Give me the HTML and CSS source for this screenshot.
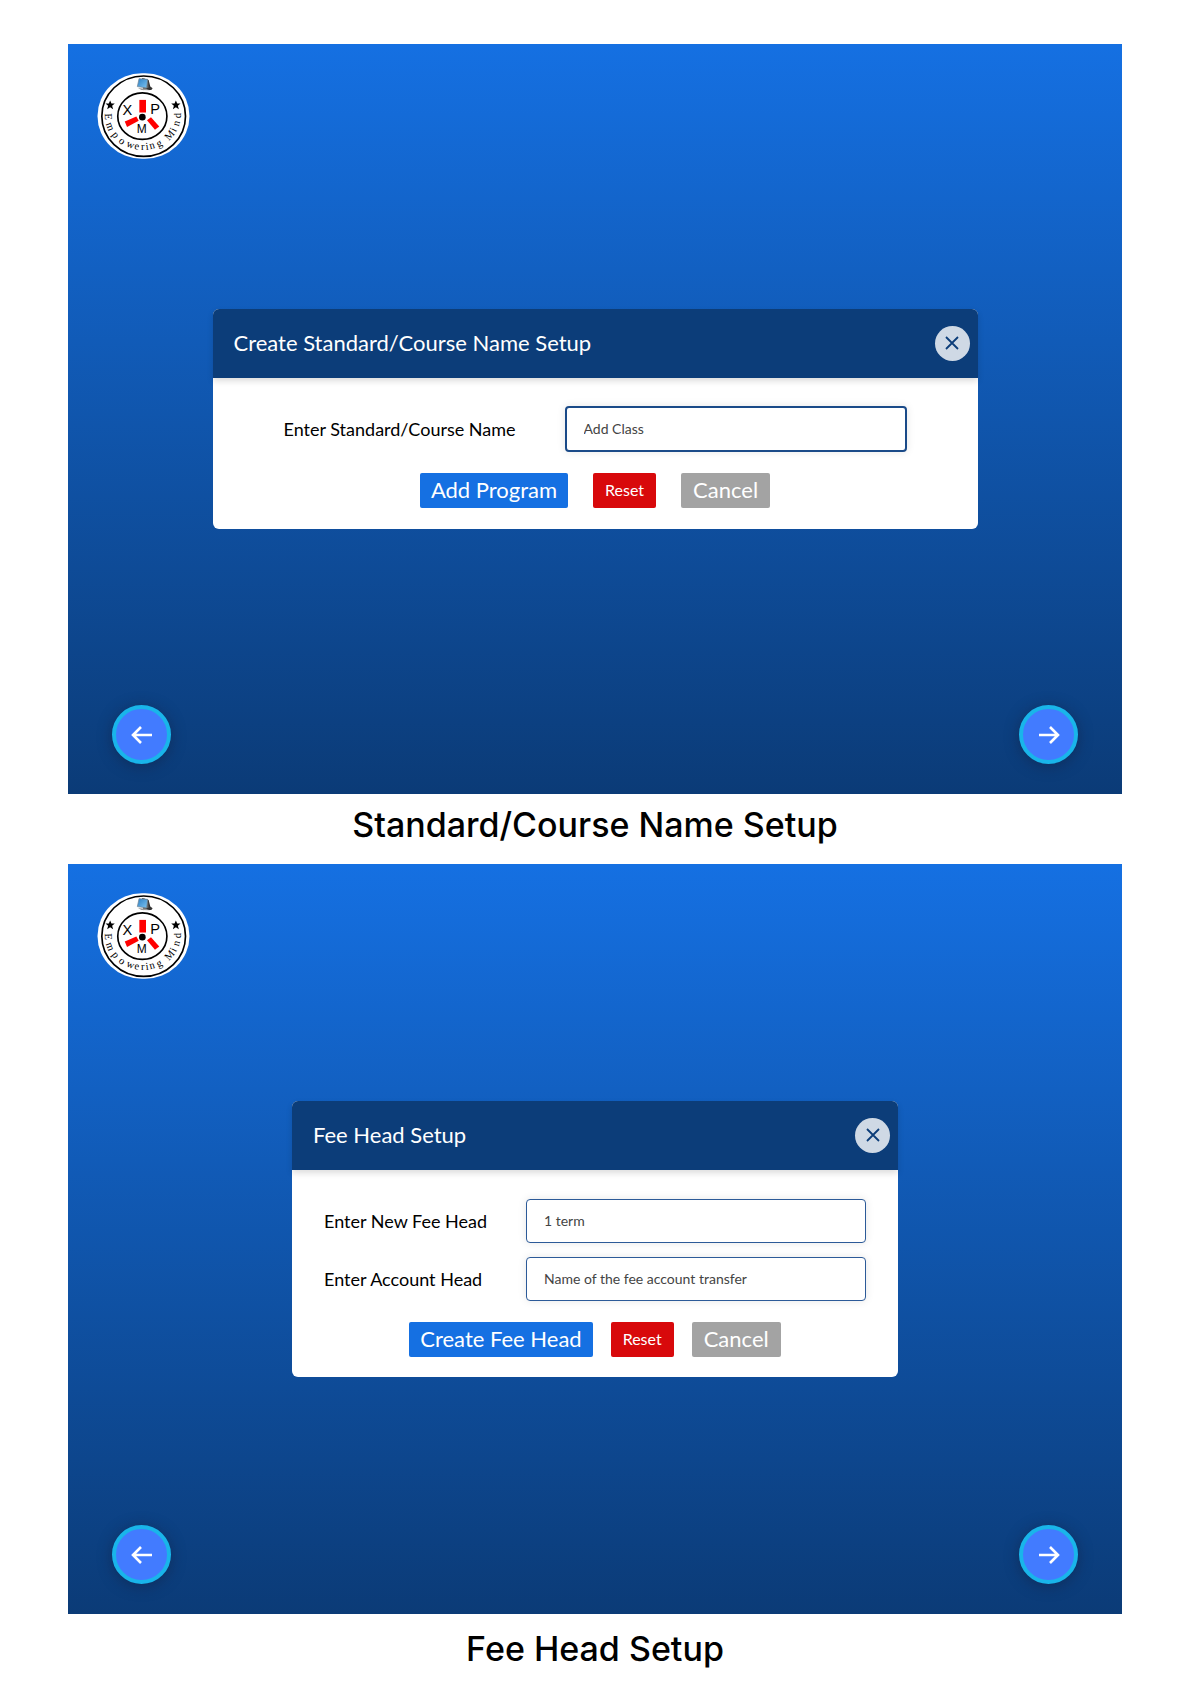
FILE: index.html
```html
<!DOCTYPE html>
<html lang="en">
<head>
<meta charset="utf-8">
<meta name="viewport" content="width=device-width, initial-scale=1">
<title>Setup screens</title>
<link rel="stylesheet" href="styles.css">
</head>
<body>
<svg class="sprite" aria-hidden="true">
  <defs>
    <linearGradient id="screen-fill" x1="0" y1="0" x2="1" y2="1">
      <stop offset="0" stop-color="#2d7fc4"/>
      <stop offset="1" stop-color="#7cc4f2"/>
    </linearGradient>
    <symbol id="logo" viewBox="110 128 279 259">
      <rect x="111" y="129" width="277" height="257" rx="134" ry="128" fill="#fff"/>
      <ellipse cx="250" cy="258" rx="126" ry="121" fill="none" stroke="#000" stroke-width="5"/>
      <ellipse cx="246" cy="258" rx="74" ry="70" fill="none" stroke="#000" stroke-width="5"/>
      <path d="M245 143l20 6 5 20 7 5-4 5h-24z" fill="#333"/>
      <path d="M247 143l16 5 2 24-17 8z" fill="#666"/>
      <path d="M236 145l26 2-3 26-28-4z" fill="url(#screen-fill)" stroke="#6b7f8e" stroke-width="2"/>
      <path d="M233 173l26 3 10 4-26-1z" fill="#999"/>
      <path id="star" d="M149 211l4 9 10 0-8 7 3 10-9-6-9 6 3-10-8-7 10 0z" fill="#000"/>
      <use href="#star" x="198"/>
      <rect x="237" y="209" width="20" height="38" fill="#f00"/>
      <path d="M193 274l35-15 7 13-35 19z" fill="#f00"/>
      <path d="M260 270l12-9 25 28-13 10z" fill="#f00"/>
      <circle cx="246" cy="261" r="10" fill="#000"/>
      <text class="logo-initial" x="186" y="256">X</text>
      <text class="logo-initial" x="270" y="253">P</text>
      <text class="logo-initial logo-initial-small" x="229" y="308">M</text>
      <text class="logo-motto"
        x="133 136 153 173 196 221 242 257 270 294 312 326 347 356 362"
        y="250 281 314 336 349 357 360 360 358 352 340 333 307 290 264"
        rotate="88 70 52 36 21 10 0 -7 -15 -27 -38 -49 -63 -75 -90">Empowering Mind</text>
    </symbol>
    <symbol id="arrow-left" viewBox="0 0 24 24">
      <path d="M22 12H3M11 4l-8 8 8 8" fill="none" stroke="#fff" stroke-width="2.6"/>
    </symbol>
    <symbol id="arrow-right" viewBox="0 0 24 24">
      <path d="M2 12h19M13 4l8 8-8 8" fill="none" stroke="#fff" stroke-width="2.6"/>
    </symbol>
    <symbol id="close" viewBox="0 0 14 14">
      <path d="M1 1l12 12M13 1L1 13" fill="none" stroke="#0c3d79" stroke-width="1.8"/>
    </symbol>
  </defs>
</svg>

<main class="board">
  <figure class="frame">
    <section class="scene">
      <svg class="logo" role="img" aria-label="XPM Empowering Mind"><use href="#logo"/></svg>
      <form class="card card-wide">
        <header class="card-header">
          <h2 class="card-title">Create Standard/Course Name Setup</h2>
          <button class="close" type="button" aria-label="Close"><svg class="close-icon"><use href="#close"/></svg></button>
        </header>
        <div class="card-body">
          <div class="field">
            <label class="label" for="course-name">Enter Standard/Course Name</label>
            <input class="input" id="course-name" type="text" placeholder="Add Class">
          </div>
          <div class="actions">
            <button class="btn btn-primary" type="submit">Add Program</button>
            <button class="btn btn-reset" type="reset">Reset</button>
            <button class="btn btn-cancel" type="button">Cancel</button>
          </div>
        </div>
      </form>
      <nav class="pager">
        <button class="round" type="button" aria-label="Previous"><svg class="round-icon"><use href="#arrow-left"/></svg></button>
        <button class="round" type="button" aria-label="Next"><svg class="round-icon"><use href="#arrow-right"/></svg></button>
      </nav>
    </section>
    <figcaption class="caption">Standard/Course Name Setup</figcaption>
  </figure>

  <figure class="frame">
    <section class="scene">
      <svg class="logo" role="img" aria-label="XPM Empowering Mind"><use href="#logo"/></svg>
      <form class="card card-narrow">
        <header class="card-header">
          <h2 class="card-title">Fee Head Setup</h2>
          <button class="close" type="button" aria-label="Close"><svg class="close-icon"><use href="#close"/></svg></button>
        </header>
        <div class="card-body">
          <div class="field">
            <label class="label" for="fee-head">Enter New Fee Head</label>
            <input class="input" id="fee-head" type="text" placeholder="1 term">
          </div>
          <div class="field">
            <label class="label" for="account-head">Enter Account Head</label>
            <input class="input" id="account-head" type="text" placeholder="Name of the fee account transfer">
          </div>
          <div class="actions">
            <button class="btn btn-primary" type="submit">Create Fee Head</button>
            <button class="btn btn-reset" type="reset">Reset</button>
            <button class="btn btn-cancel" type="button">Cancel</button>
          </div>
        </div>
      </form>
      <nav class="pager">
        <button class="round" type="button" aria-label="Previous"><svg class="round-icon"><use href="#arrow-left"/></svg></button>
        <button class="round" type="button" aria-label="Next"><svg class="round-icon"><use href="#arrow-right"/></svg></button>
      </nav>
    </section>
    <figcaption class="caption">Fee Head Setup</figcaption>
  </figure>
</main>
</body>
</html>
```

FILE: styles.css
```css
*,
*::before,
*::after {
  box-sizing: border-box;
}

body {
  margin: 0;
  background: #fff;
  color: #000;
  font-family: Lato, "Liberation Sans", sans-serif;
}

button,
input {
  font: inherit;
}

.sprite {
  display: block;
  width: 0;
  height: 0;
}

.board {
  padding: 44px 68px 0;
}

.frame {
  margin: 0;
}

.scene {
  display: grid;
  grid-template-rows: 1fr auto 1fr;
  min-height: 750px;
  padding: 29px 29px 30px;
  background: linear-gradient(180deg, #1570e2 0%, #0b3b77 100%);
}

.caption {
  padding: 7px 0 15px;
  font-family: Inter, "Liberation Sans", sans-serif;
  font-size: 34px;
  font-weight: 500;
  line-height: 48px;
  text-align: center;
}

.frame:last-child .caption {
  padding: 11px 0;
}

.logo {
  width: 93px;
  height: 86px;
}

.logo-initial {
  font-family: "Liberation Sans", sans-serif;
  font-size: 44px;
}

.logo-initial-small {
  font-size: 36px;
}

.logo-motto {
  font-family: "Liberation Serif", serif;
  font-size: 32px;
}

.card {
  justify-self: center;
  width: 100%;
  border-radius: 6px;
  background: #fff;
}

.card-wide {
  max-width: 765px;
}

.card-narrow {
  max-width: 606px;
}

.card-header {
  display: flex;
  align-items: center;
  justify-content: space-between;
  min-height: 69px;
  padding: 0 8px 0 21px;
  border-radius: 6px 6px 0 0;
  background: #0c3d79;
  box-shadow: 0 3px 6px rgba(0, 0, 0, 0.14);
}

.card-title {
  margin: 0;
  color: #fff;
  font-size: 22px;
  font-weight: 400;
  line-height: 28px;
}

.close {
  display: grid;
  place-items: center;
  width: 35px;
  height: 35px;
  padding: 0;
  border: 0;
  border-radius: 50%;
  background: #cfd9e5;
}

.close-icon {
  width: 14px;
  height: 14px;
}

.card-body {
  display: grid;
  gap: 14px;
  padding: 29px 32px 20px;
}

.card-wide .card-body {
  padding: 28px 71px 21px;
}

.field {
  display: flex;
  align-items: center;
  justify-content: space-between;
  gap: 16px;
}

.label {
  font-size: 18px;
  line-height: 24px;
}

.input {
  width: 340px;
  height: 44px;
  padding: 0 17px;
  border: 1px solid #2c5a98;
  border-radius: 4px;
  background: #fff;
  box-shadow: 0 0 8px rgba(0, 0, 0, 0.1);
  color: #444;
  font-size: 14px;
}

.card-wide .input {
  width: 342px;
  height: 46px;
  border: 2px solid #1a4a88;
}

.input::placeholder {
  color: #444;
  opacity: 1;
}

.actions {
  display: flex;
  justify-content: center;
  gap: 18px;
  padding-top: 7px;
}

.card-wide .actions {
  gap: 25px;
}

.btn {
  height: 35px;
  padding: 0 12px;
  border: 0;
  border-radius: 2px;
  color: #fff;
  font-size: 22px;
  line-height: 34px;
}

.btn-primary {
  padding: 0 11px;
  background: #1570e2;
}

.btn-reset {
  padding: 0 12px;
  background: #d8090b;
  font-size: 16px;
}

.btn-cancel {
  background: #a3a3a3;
}

.pager {
  display: flex;
  align-items: flex-end;
  justify-content: space-between;
  padding: 0 15px;
}

.round {
  display: grid;
  place-items: center;
  width: 59px;
  height: 59px;
  padding: 0;
  border: 4px solid #19b5ea;
  border-radius: 50%;
  background: #427bff;
  box-shadow: 0 2px 14px rgba(20, 30, 60, 0.5);
}

.round-icon {
  width: 24px;
  height: 24px;
}
```
